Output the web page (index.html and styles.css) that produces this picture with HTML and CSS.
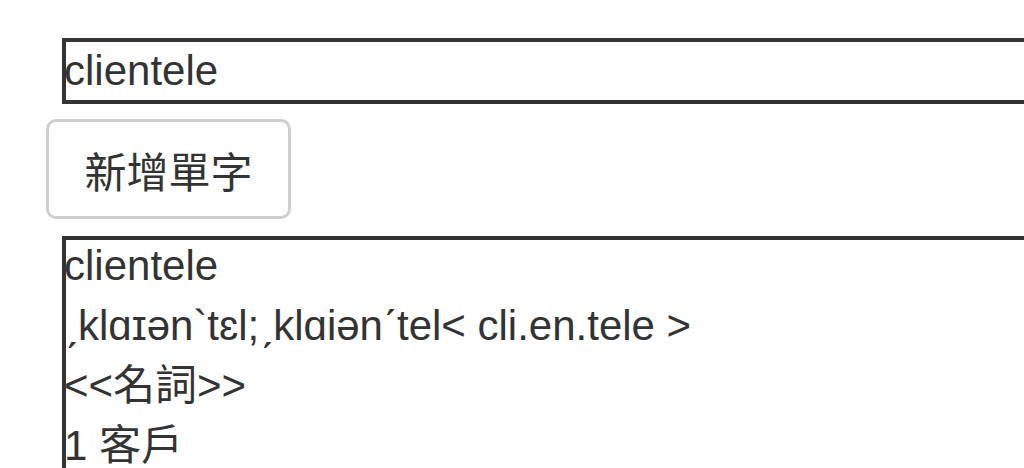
FILE: index.html
```html
<!DOCTYPE html>
<html lang="zh-Hant">
<head>
<meta charset="utf-8">
<link rel="stylesheet" href="styles.css">
</head>
<body>
<main class="page">
  <input class="word-input" type="text" value="clientele">
  <button class="add-btn" type="button">新增單字</button>
  <section class="result">
    <div class="line">clientele</div>
    <div class="line">ˏklɑɪən`tɛl;ˏklɑiənˊtel&lt; cli.en.tele &gt;</div>
    <div class="line">&lt;&lt;名詞&gt;&gt;</div>
    <div class="line">1 客戶</div>
  </section>
</main>
</body>
</html>
```

FILE: styles.css
```css
html, body {
  margin: 0;
  padding: 0;
  overflow: hidden;
  background: #fff;
}

body {
  font-family: "Liberation Sans", Arial, "Noto Sans CJK TC", sans-serif;
  color: #333;
}

.page {
  padding: 38px 0 0 62px;
  display: flex;
  flex-direction: column;
  align-items: stretch;
}

.word-input {
  box-sizing: border-box;
  width: 100%;
  height: 66px;
  margin: 0;
  padding: 0;
  border: 4px solid #333;
  border-right: 0;
  border-radius: 0;
  font-family: "Liberation Sans", Arial, "Noto Sans CJK TC", sans-serif;
  font-size: 42px;
  color: #333;
  background: #fff;
  outline: none;
  text-indent: -2px;
}

.add-btn {
  box-sizing: border-box;
  align-self: flex-start;
  margin: 15px 0 0 -16px;
  width: 245px;
  height: 100px;
  padding: 0;
  border: 3px solid #cfcfcf;
  border-radius: 10px;
  background: #fff;
  color: #333;
  font-family: "Noto Sans CJK TC", "Liberation Sans", sans-serif;
  font-size: 42px;
  display: flex;
  align-items: center;
  justify-content: center;
}

.result {
  box-sizing: border-box;
  margin-top: 17px;
  border-top: 4px solid #333;
  border-left: 4px solid #333;
  display: flex;
  flex-direction: column;
  gap: 9px;
  font-size: 42px;
}

.line {
  line-height: 51px;
  white-space: nowrap;
  text-indent: -2px;
}
```
